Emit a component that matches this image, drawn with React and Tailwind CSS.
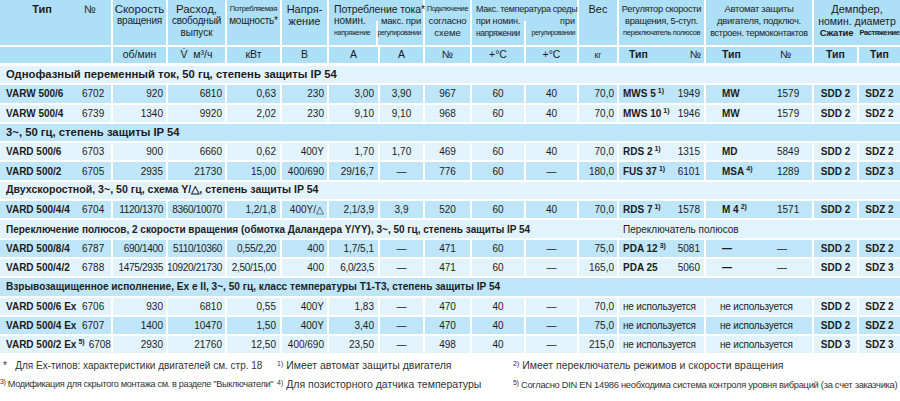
import React from "react";

const DARK = "bg-[#bfe5f8]";
const PALE = "bg-[#e3f3fc]";
const HEAD = "bg-[#addff6]";

// Zeilen: s = Abschnitt, sonst Daten
const rows = [
  { s: "Однофазный переменный ток, 50 гц, степень защиты IP 54", size: "text-[11.3px]" },
  { t: "VARW 500/6", n: "6702", v: ["920", "6810", "0,63", "230", "3,00", "3,90", "967", "60", "40", "70,0"], reg: ["MWS 5", "1)", "1949"], aut: ["MW", "", "1579"], d: ["SDD 2", "SDZ 2"] },
  { t: "VARW 500/4", n: "6739", v: ["1340", "9920", "2,02", "230", "9,10", "9,10", "968", "60", "40", "70,0"], reg: ["MWS 10", "1)", "1946"], aut: ["MW", "", "1579"], d: ["SDD 2", "SDZ 2"] },
  { s: "3~, 50 гц, степень защиты IP 54", size: "text-[11.3px]" },
  { t: "VARD 500/6", n: "6703", v: ["900", "6660", "0,62", "400Y", "1,70", "1,70", "469", "60", "40", "70,0"], reg: ["RDS 2", "1)", "1315"], aut: ["MD", "", "5849"], d: ["SDD 2", "SDZ 2"] },
  { t: "VARD 500/2", n: "6705", v: ["2935", "21730", "15,00", "400/690", "29/16,7", "—", "776", "60", "—", "180,0"], reg: ["FUS 37", "1)", "6101"], aut: ["MSA", "4)", "1289"], d: ["SDD 2", "SDZ 3"] },
  { s: "Двухскоростной, 3~, 50 гц, схема Y/△, степень защиты IP 54", size: "text-[10.6px]" },
  { t: "VARD 500/4/4", n: "6704", v: ["1120/1370", "8360/10070", "1,2/1,8", "400Y/△", "2,1/3,9", "3,9", "520", "60", "40", "70,0"], reg: ["RDS 7", "1)", "1578"], aut: ["M 4", "2)", "1571"], d: ["SDD 2", "SDZ 2"] },
  { s: "Переключение полюсов, 2 скорости вращения (обмотка Даландера Y/YY), 3~, 50 гц, степень защиты IP 54", size: "text-[10px]", extra: "Переключатель полюсов" },
  { t: "VARD 500/8/4", n: "6787", v: ["690/1400", "5110/10360", "0,55/2,20", "400", "1,7/5,1", "—", "471", "60", "—", "75,0"], reg: ["PDA 12", "3)", "5081"], aut: ["—", "", "—"], d: ["SDD 2", "SDZ 2"] },
  { t: "VARD 500/4/2", n: "6788", v: ["1475/2935", "10920/21730", "2,50/15,00", "400", "6,0/23,5", "—", "471", "60", "—", "165,0"], reg: ["PDA 25", "", "5060"], aut: ["—", "", "—"], d: ["SDD 2", "SDZ 3"] },
  { s: "Взрывозащищенное исполнение, Ex e II, 3~, 50 гц, класс температуры Т1-Т3, степень защиты IP 54", size: "text-[10.1px]" },
  { t: "VARD 500/6 Ex", n: "6706", v: ["930", "6810", "0,55", "400Y", "1,83", "—", "470", "40", "—", "70,0"], reg: ["не используется"], aut: ["не используется"], d: ["SDD 2", "SDZ 2"] },
  { t: "VARD 500/4 Ex", n: "6707", v: ["1400", "10470", "1,50", "400Y", "3,40", "—", "470", "40", "—", "75,0"], reg: ["не используется"], aut: ["не используется"], d: ["SDD 2", "SDZ 2"] },
  { t: "VARD 500/2 Ex", tsup: "5)", n: "6708", v: ["2930", "21760", "12,50", "400/690", "23,50", "—", "498", "40", "—", "215,0"], reg: ["не используется"], aut: ["не используется"], d: ["SDD 3", "SDZ 3"] },
];

// Ausrichtung je Wertespalte (Skorost' … Ves)
const align = [
  "justify-end pr-[3px]",
  "justify-end pr-[3px]",
  "justify-end pr-[4px]",
  "justify-end pr-[3px]",
  "justify-end pr-[4px]",
  "justify-center",
  "justify-center",
  "justify-center",
  "justify-center",
  "justify-end pr-[3px]",
];

function Sup({ children }) {
  return <sup className="text-[7px] font-bold -top-[4px] ml-[2px]">{children}</sup>;
}

function HeadCell({ className = "", children }) {
  return (
    <div className={`${HEAD} flex flex-col items-center text-center leading-[12px] pt-[3px] ${className}`}>
      {children}
    </div>
  );
}

function DataRow({ r, bg }) {
  const cell = `h-[17.3px] flex items-center ${bg}`;
  return (
    <>
      <div className={`${cell} pl-[6px]`}>
        <span className="font-bold min-w-[76px] pr-[4px] shrink-0 whitespace-nowrap">
          {r.t}
          {r.tsup && <Sup>{r.tsup}</Sup>}
        </span>
        <span>{r.n}</span>
      </div>
      {r.v.map((v, i) => (
        <div key={i} className={`${cell} ${align[i]} whitespace-nowrap ${v.length > 7 ? "tracking-[-0.3px]" : ""}`}>
          {v}
        </div>
      ))}
      {r.reg.length === 1 ? (
        <div className={`${cell} pl-[4px] whitespace-nowrap tracking-[-0.2px]`}>{r.reg[0]}</div>
      ) : (
        <div className={`${cell} pl-[4px] pr-[4px] justify-between`}>
          <span className="font-bold whitespace-nowrap">
            {r.reg[0]}
            {r.reg[1] && <Sup>{r.reg[1]}</Sup>}
          </span>
          <span>{r.reg[2]}</span>
        </div>
      )}
      {r.aut.length === 1 ? (
        <div className={`${cell} pl-[14px] whitespace-nowrap tracking-[-0.2px]`}>{r.aut[0]}</div>
      ) : (
        <div className={`${cell} pl-[16px]`}>
          <span className="font-bold w-[55px] shrink-0 whitespace-nowrap">
            {r.aut[0]}
            {r.aut[1] && <Sup>{r.aut[1]}</Sup>}
          </span>
          <span>{r.aut[2]}</span>
        </div>
      )}
      <div className={`${cell} justify-center font-bold`}>{r.d[0]}</div>
      <div className={`${cell} justify-center font-bold`}>{r.d[1]}</div>
    </>
  );
}

export default function App() {
  return (
    <div className="w-[900px] h-[401px] bg-white text-[#1c1c1c] font-['Liberation_Sans',Arial,sans-serif] text-[10px] overflow-hidden">
      <div className="grid grid-cols-[111px_53px_57px_53px_45px_49px_43px_45px_52px_51px_38px_85px_106px_43px_41px] gap-[2px]">
        {/* Kopfzeile */}
        <div className={`h-[45px] ${HEAD} flex pt-[3px] leading-[12px] text-[11px]`}>
          <span className="font-bold w-[84px] text-center">Тип</span>
          <span>№</span>
        </div>
        <HeadCell className="text-[11.5px]">
          <span>Скорость</span>
          <span className="text-[10px] tracking-[-0.2px]">вращения</span>
        </HeadCell>
        <HeadCell className="text-[11.5px] leading-[12.5px]">
          <span>Расход,</span>
          <span className="text-[10px] tracking-[-0.2px]">свободный</span>
          <span className="text-[10px]">выпуск</span>
        </HeadCell>
        <HeadCell>
          <span className="text-[7.5px] tracking-[-0.3px] whitespace-nowrap">Потребляемая</span>
          <span className="text-[10px] tracking-[-0.2px]">мощность*</span>
        </HeadCell>
        <HeadCell className="text-[11px]">
          <span>Напря-</span>
          <span>жение</span>
        </HeadCell>
        <div className={`col-span-2 ${HEAD} flex flex-col pt-[3px] leading-[12px]`}>
          <span className="text-[10.5px] pl-[5px] whitespace-nowrap tracking-[-0.1px]">Потребление тока*</span>
          <div className="flex flex-1">
            <div className="w-[49px] flex flex-col pl-[5px]">
              <span className="text-[10px]">номин.</span>
              <span className="text-[7px] tracking-[-0.3px] whitespace-nowrap">напряжение</span>
            </div>
            <div className="flex-1 flex flex-col items-end pr-[2px] border-l-2 border-white mt-[6px]">
              <span className="text-[9.5px] -mt-[6px] whitespace-nowrap tracking-[-0.2px]">макс. при</span>
              <span className="text-[7px] tracking-[-0.4px] whitespace-nowrap">регулировании</span>
            </div>
          </div>
        </div>
        <HeadCell>
          <span className="text-[7px] tracking-[-0.3px] whitespace-nowrap">Подключение</span>
          <span className="text-[9.5px] tracking-[-0.2px]">согласно</span>
          <span className="text-[9.5px]">схеме</span>
        </HeadCell>
        <div className={`col-span-2 ${HEAD} flex flex-col pt-[3px] leading-[12px]`}>
          <span className="text-[9px] pl-[4px] whitespace-nowrap tracking-[-0.3px]">Макс. температура среды</span>
          <div className="flex flex-1">
            <div className="w-[52px] flex flex-col pl-[4px]">
              <span className="text-[9px] whitespace-nowrap tracking-[-0.2px]">при номин.</span>
              <span className="text-[8.5px] whitespace-nowrap tracking-[-0.4px]">напряжении</span>
            </div>
            <div className="flex-1 flex flex-col items-end pr-[2px] border-l-2 border-white mt-[6px]">
              <span className="text-[9px] -mt-[6px]">при</span>
              <span className="text-[7px] tracking-[-0.4px] whitespace-nowrap">регулировании</span>
            </div>
          </div>
        </div>
        <HeadCell className="text-[11px]">
          <span>Вес</span>
        </HeadCell>
        <HeadCell className="text-[9.3px] tracking-[-0.3px]">
          <span className="whitespace-nowrap">Регулятор скорости</span>
          <span className="whitespace-nowrap">вращения, 5-ступ.</span>
          <span className="text-[7.5px] tracking-[-0.4px] whitespace-nowrap">переключатель полюсов</span>
        </HeadCell>
        <HeadCell className="text-[9.5px] tracking-[-0.3px]">
          <span className="whitespace-nowrap">Автомат защиты</span>
          <span className="whitespace-nowrap">двигателя, подключ.</span>
          <span className="text-[9px] whitespace-nowrap">встроен. термоконтактов</span>
        </HeadCell>
        <div className={`col-span-2 ${HEAD} flex flex-col items-center pt-[3px] leading-[12px] text-[11px]`}>
          <span>Демпфер,</span>
          <span className="whitespace-nowrap text-[10.5px]">номин. диаметр</span>
          <div className="flex w-full">
            <span className="w-[45px] text-center font-bold text-[9.5px] tracking-[-0.2px]">Сжатие</span>
            <span className="flex-1 text-center font-bold text-[7.5px] tracking-[-0.4px]">Растяжение</span>
          </div>
        </div>

        {/* Einheiten */}
        <div className={`h-[16px] ${HEAD}`} />
        {["об/мин", "V̇  м³/ч", "кВт", "В", "А", "А", "№", "+°C", "+°C"].map((u, i) => (
          <div key={i} className={`h-[16px] ${HEAD} flex items-center justify-center text-[10.5px] whitespace-pre`}>
            {u}
          </div>
        ))}
        <div className={`h-[16px] ${HEAD} flex items-center justify-center text-[8.5px]`}>кг</div>
        <div className={`h-[16px] ${HEAD} flex items-center justify-between pl-[10px] pr-[3px] text-[10.5px]`}>
          <span className="font-bold">Тип</span>
          <span>№</span>
        </div>
        <div className={`h-[16px] ${HEAD} flex items-center pl-[16px] text-[10.5px]`}>
          <span className="font-bold w-[58px]">Тип</span>
          <span>№</span>
        </div>
        <div className={`h-[16px] ${HEAD} flex items-center justify-center font-bold text-[10.5px]`}>Тип</div>
        <div className={`h-[16px] ${HEAD} flex items-center justify-center font-bold text-[10.5px]`}>Тип</div>

        {/* Tabelle */}
        {rows.map((r, i) => {
          const bg = i % 2 === 0 ? PALE : DARK;
          if (r.s) {
            return (
              <div key={i} className={`col-span-full h-[17.3px] flex items-center ${bg} ${i === 0 ? "mt-[1px]" : ""}`}>
                <span className={`font-bold ${r.size} pl-[6px] whitespace-nowrap ${r.extra ? "w-[623px] shrink-0" : ""}`}>{r.s}</span>
                {r.extra && <span className="text-[10px]">{r.extra}</span>}
              </div>
            );
          }
          return <DataRow key={i} r={r} bg={bg} />;
        })}
      </div>

      {/* Fußnoten */}
      <div className="mt-[3px] text-[10px] text-[#333] leading-[19px]">
        <div className="flex">
          <span className="w-[277px] pl-[3px] whitespace-nowrap">*&nbsp;&nbsp; Для Ex-типов: характеристики двигателей см. стр. 18</span>
          <span className="w-[236px] whitespace-nowrap text-[10.5px]">
            <sup className="text-[7px]">1)</sup> Имеет автомат защиты двигателя
          </span>
          <span className="whitespace-nowrap text-[10.5px]">
            <sup className="text-[7px]">2)</sup> Имеет переключатель режимов и скорости вращения
          </span>
        </div>
        <div className="flex">
          <span className="w-[277px] text-[9.2px] tracking-[-0.35px] whitespace-nowrap">
            <sup className="text-[7px]">3)</sup> Модификация для скрытого монтажа см. в разделе "Выключатели"
          </span>
          <span className="w-[236px] whitespace-nowrap text-[10.5px]">
            <sup className="text-[7px]">4)</sup> Для позисторного датчика температуры
          </span>
          <span className="text-[9.4px] tracking-[-0.3px] whitespace-nowrap">
            <sup className="text-[7px]">5)</sup> Согласно DIN EN 14986 необходима система контроля уровня вибраций (за счет заказчика)
          </span>
        </div>
      </div>
    </div>
  );
}
